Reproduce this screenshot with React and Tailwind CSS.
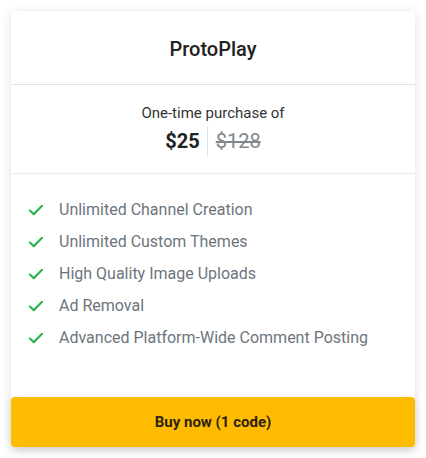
export default function App() {
  const features = [
    "Unlimited Channel Creation",
    "Unlimited Custom Themes",
    "High Quality Image Uploads",
    "Ad Removal",
    "Advanced Platform-Wide Comment Posting",
  ];

  return (
    <div className="min-h-screen bg-white pt-[11px] px-[11px] font-['Roboto',sans-serif]">
      <div className="w-[404px] bg-white rounded-[4px] shadow-[0_2px_12px_rgba(0,0,0,0.12)]">
        {/* title */}
        <div className="h-[74px] flex items-center justify-center border-b border-[#dfe3e6]">
          <h1 className="text-[20px] font-medium text-[#222] pt-[3px]">ProtoPlay</h1>
        </div>

        {/* price */}
        <div className="h-[89px] flex flex-col items-center border-b border-[#e9ecef] pt-[17px]">
          <p className="text-[15px] text-[#333] leading-[22px]">One-time purchase of</p>
          <div className="mt-[3px] flex items-center">
            <span className="text-[20px] font-bold text-[#222] pr-[7px] leading-[29px]">$25</span>
            <span className="w-px h-[29px] bg-[#dee2e6]" />
            <span className="text-[20px] text-[#80878d] line-through pl-[8px] leading-[29px]">$128</span>
          </div>
        </div>

        {/* features */}
        <ul className="pt-[24px] pb-[47px] px-[16px] flex flex-col gap-[8px]">
          {features.map((f) => (
            <li key={f} className="flex items-center h-[24px]">
              <svg width="16" height="16" viewBox="0 0 16 16" className="shrink-0 ml-[1px]">
                <path d="M2 8.5l3.8 3.8L14 3.8" fill="none" stroke="#22b24c" strokeWidth="2" strokeLinecap="round" strokeLinejoin="round" />
              </svg>
              <span className="ml-[15px] text-[16px] text-[#6c757d]">{f}</span>
            </li>
          ))}
        </ul>

        <button className="w-full h-[50px] rounded-[4px] bg-[#ffbb00] text-[15px] font-bold text-[#2b2310] shadow-[0_3px_8px_rgba(0,0,0,0.12)]">
          Buy now (1 code)
        </button>
      </div>
    </div>
  );
}
